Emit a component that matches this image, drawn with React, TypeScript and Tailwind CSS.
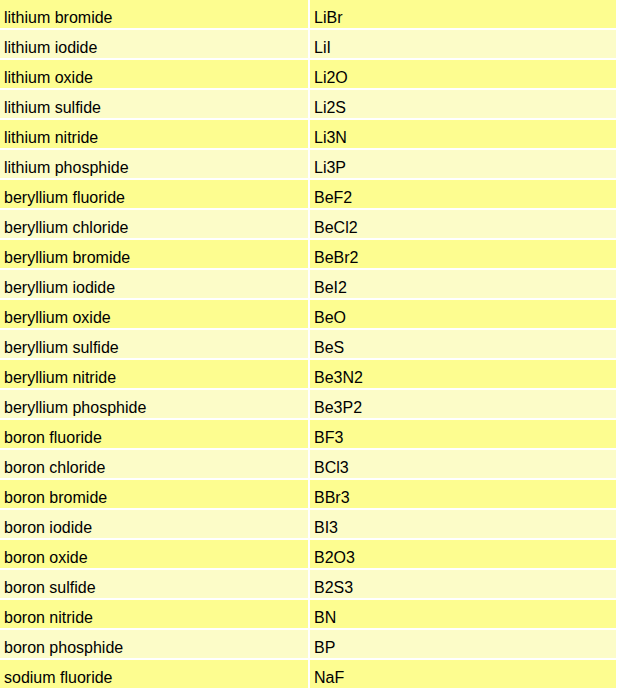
const compounds: [string, string][] = [
  ["lithium bromide", "LiBr"],
  ["lithium iodide", "LiI"],
  ["lithium oxide", "Li2O"],
  ["lithium sulfide", "Li2S"],
  ["lithium nitride", "Li3N"],
  ["lithium phosphide", "Li3P"],
  ["beryllium fluoride", "BeF2"],
  ["beryllium chloride", "BeCl2"],
  ["beryllium bromide", "BeBr2"],
  ["beryllium iodide", "BeI2"],
  ["beryllium oxide", "BeO"],
  ["beryllium sulfide", "BeS"],
  ["beryllium nitride", "Be3N2"],
  ["beryllium phosphide", "Be3P2"],
  ["boron fluoride", "BF3"],
  ["boron chloride", "BCl3"],
  ["boron bromide", "BBr3"],
  ["boron iodide", "BI3"],
  ["boron oxide", "B2O3"],
  ["boron sulfide", "B2S3"],
  ["boron nitride", "BN"],
  ["boron phosphide", "BP"],
  ["sodium fluoride", "NaF"],
]

export default function App() {
  return (
    <div className="h-[688px] w-[618px] overflow-hidden bg-white font-['Liberation_Sans',Arial,sans-serif] text-[16px] leading-[18px] text-black">
      <div className="grid grid-cols-[308px_306px] gap-[2px]">
        {compounds.map(([name, formula], i) => {
          const bg = i % 2 === 0 ? "bg-[#fdfd90]" : "bg-[#fcfcc8]"
          return (
            <div key={name} className="contents">
              <div className={`${bg} h-[28px] px-[4px] pt-[9px]`}>{name}</div>
              <div className={`${bg} h-[28px] px-[4px] pt-[9px]`}>{formula}</div>
            </div>
          )
        })}
      </div>
    </div>
  )
}
